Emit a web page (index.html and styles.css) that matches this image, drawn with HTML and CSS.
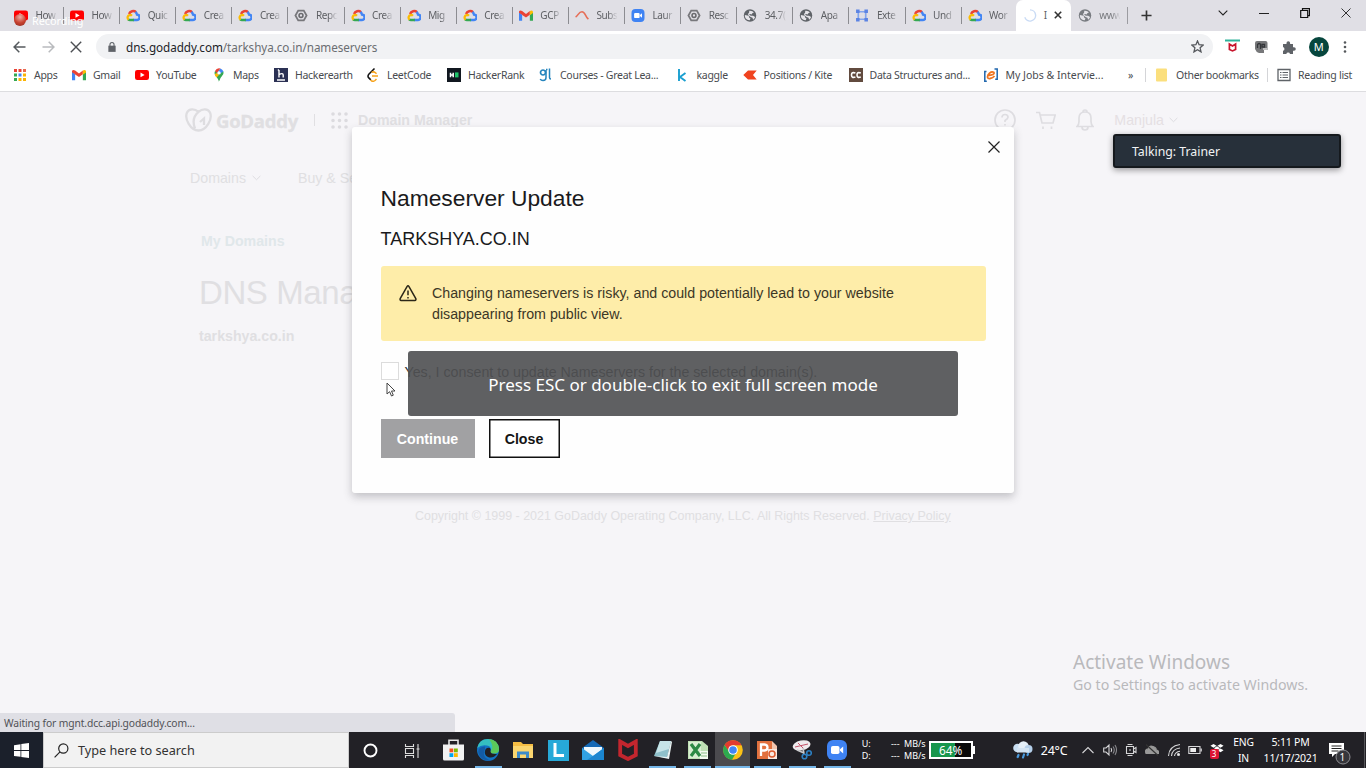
FILE: index.html
```html
<!DOCTYPE html>
<html lang="en">
<head>
<meta charset="utf-8">
<title>DNS Management</title>
<link rel="stylesheet" href="styles.css">
</head>
<body>
<svg class="defs" width="0" height="0">
  <symbol id="yt" viewBox="0 0 16 12"><rect width="16" height="11.5" y=".2" rx="2.6" fill="#f00"/><path d="M6.3 3.2v5.4L11 5.9z" fill="#fff"/></symbol>
  <symbol id="cloud" viewBox="0 0 16 14"><path d="M3.5 5.3A5 5 0 0 1 11.5 3.2" fill="none" stroke="#ea4335" stroke-width="2.8"/><path d="M10.8 3A5 5 0 0 1 12.6 6a3.1 3.1 0 0 1-.4 6.2H8" fill="none" stroke="#4285f4" stroke-width="2.8"/><path d="M9 12.2H4.6A3 3 0 0 1 2.5 11.4" fill="none" stroke="#34a853" stroke-width="2.8"/><path d="M3 11.8A3.2 3.2 0 0 1 4.4 6.2q1.4 0 2.4 1.1" fill="none" stroke="#fbbc04" stroke-width="2.6"/></symbol>
  <symbol id="hex" viewBox="0 0 14 14"><path d="M4 1.8h6L13 7l-3 5.2H4L1 7z" fill="none" stroke="#77777b" stroke-width="1.9"/><circle cx="7" cy="7" r="2.1" fill="none" stroke="#6a6a6e" stroke-width="1.7"/></symbol>
  <symbol id="gmail" viewBox="0 0 16 12"><path d="M0 1.7V12h3.6V5z" fill="#4285f4"/><path d="M16 1.7V12h-3.6V5z" fill="#34a853"/><path d="M0 1.5Q.8-.5 3.6.9L8 4.2 12.4.9 12.4 5 8 8.3 3.6 5.4V12L3.6 5 0 2.9z" fill="#ea4335"/><path d="M12.4.9Q15-.5 16 1.5v1.6L12.4 5.8z" fill="#fbbc04"/></symbol>
  <symbol id="sub" viewBox="0 0 14 12"><path d="M.6 7.5C3.4 6 3.6 2.2 7 2.2c3.3 0 2.8 4.2 6.4 7.5" fill="none" stroke="#e66e57" stroke-width="1.6"/></symbol>
  <symbol id="zoomus" viewBox="0 0 20 20"><rect width="20" height="20" rx="6" fill="#3f83f3"/><rect x="4" y="6" width="8.5" height="8" rx="1.8" fill="#fff"/><path d="M13 9.2 16.2 6.6v6.8L13 10.8z" fill="#fff"/></symbol>
  <symbol id="globe" viewBox="0 0 14 14"><circle cx="7" cy="7" r="6.7" fill="#5f6368"/><path d="M1.5 6.5 4 7q2 0 2 1.500T7.500 10L6.800 12.200Q2.500 12 1.500 8zM6.200 1.900q3.500-.3 5 1.800l-1.700.8-.8 1.300-1.700-.5-1 1 2 1 2.300.1 2.200 1.200q-.5 2-2.200 3l-.6-2.300-2-.6L5.500 7 4.800 5.300 6 4z" fill="#e5e4e9"/></symbol>
  <symbol id="ext" viewBox="0 0 14 14"><path d="M3 3h8v8H3z" fill="none" stroke="#84a5ec" stroke-width="1.8"/><path d="M.6.6h3.8v3.8H.6zM9.6.6h3.8v3.8H9.6zM.6 9.6h3.8v3.8H.6zM9.6 9.6h3.8v3.8H9.6z" fill="#5b83e3"/></symbol>
  <symbol id="down" viewBox="0 0 10 6"><path d="m.7.7 4.3 4.2L9.3.7" fill="none" stroke="currentColor" stroke-width="1.1"/></symbol>
  <symbol id="x" viewBox="0 0 12 12"><path d="m.8.8 10.4 10.4M11.2.8.8 11.2" fill="none" stroke="currentColor" stroke-width="1.4"/></symbol>
</svg>

<div class="tabs">
  <div class="tab"><svg><use href="#yt"/></svg><span>How</span></div>
  <div class="tab"><svg><use href="#yt"/></svg><span>How</span></div>
  <div class="tab"><svg><use href="#cloud"/></svg><span>Quic</span></div>
  <div class="tab"><svg><use href="#cloud"/></svg><span>Crea</span></div>
  <div class="tab"><svg><use href="#cloud"/></svg><span>Crea</span></div>
  <div class="tab"><svg><use href="#hex"/></svg><span>Repo</span></div>
  <div class="tab"><svg><use href="#cloud"/></svg><span>Crea</span></div>
  <div class="tab"><svg><use href="#cloud"/></svg><span>Mig</span></div>
  <div class="tab"><svg><use href="#cloud"/></svg><span>Crea</span></div>
  <div class="tab"><svg><use href="#gmail"/></svg><span>GCP</span></div>
  <div class="tab"><svg><use href="#sub"/></svg><span>Subs</span></div>
  <div class="tab"><svg><use href="#zoomus"/></svg><span>Laur</span></div>
  <div class="tab"><svg><use href="#hex"/></svg><span>Resc</span></div>
  <div class="tab"><svg><use href="#globe"/></svg><span>34.7(</span></div>
  <div class="tab"><svg><use href="#globe"/></svg><span>Apa</span></div>
  <div class="tab"><svg><use href="#ext"/></svg><span>Exte</span></div>
  <div class="tab"><svg><use href="#cloud"/></svg><span>Und</span></div>
  <div class="tab last"><svg><use href="#cloud"/></svg><span>Wor</span></div>
  <div class="tab active"><svg viewBox="0 0 14 14"><path d="M7 1a6 6 0 1 1-5.6 8" fill="none" stroke="#c9dbf5" stroke-width="1.5"/></svg><span>I</span><svg class="tab-x" viewBox="0 0 8 8"><path d="m.8.8 6.400 6.400M7.200.8.8 7.200" stroke="#333" stroke-width="1.600"/></svg></div>
  <div class="tab www"><svg><use href="#globe"/></svg><span>www</span></div>
  <svg class="plus" viewBox="0 0 12 12"><path d="M6 .5v11M.5 6h11" stroke="#333" stroke-width="1.8"/></svg>
  <div class="window-buttons">
    <svg width="10" height="6"><use href="#down"/></svg>
    <svg width="10" height="10" viewBox="0 0 10 10"><path d="M0 5.500h10" stroke="#222"/></svg>
    <svg width="10" height="10" viewBox="0 0 10 10"><path d="M.7 2.5h7v7h-7zM2.5 2.3V.6h7v7H8" fill="none" stroke="#111" stroke-width="1.2"/></svg>
    <svg width="10" height="10" viewBox="0 0 10 10"><path d="m.5.5 9 9M9.500.5l-9 9" stroke="#333" stroke-width="1"/></svg>
  </div>
  <div class="recording"><i></i><span>Recording</span></div>
</div>

<div class="toolbar">
  <svg width="13" height="12" viewBox="0 0 13 12"><path d="M12.5 6H1.2M6.3.8 1.1 6l5.2 5.2" fill="none" stroke="#555a5e" stroke-width="1.5"/></svg>
  <svg width="13" height="12" viewBox="0 0 13 12"><path d="M.5 6h11.3M6.7.8 11.9 6l-5.2 5.2" fill="none" stroke="#b9bbbe" stroke-width="1.5"/></svg>
  <svg class="stop" width="12" height="12"><use href="#x"/></svg>
  <div class="omnibox">
    <svg width="8" height="10" viewBox="0 0 9 11"><path d="M.4 4h8.2v7H.4z" fill="#5f6368"/><path d="M2.2 4.5V2.8a2.3 2.3 0 0 1 4.6 0v1.7" fill="none" stroke="#5f6368" stroke-width="1.2"/></svg>
    <span class="url"><b>dns.godaddy.com</b>/tarkshya.co.in/nameservers</span>
    <svg class="star" width="13" height="13" viewBox="0 0 14 14"><path d="m7 1 1.7 4.1 4.4.4-3.3 2.9 1 4.4L7 10.5l-3.8 2.3 1-4.4L.9 5.5l4.4-.4z" fill="none" stroke="#55585c" stroke-width="1.4"/></svg>
  </div>
  <div class="tools">
    <svg width="15" height="15" viewBox="0 0 15 15"><path d="M0 1.5h15" stroke="#2eb39b" stroke-width="2"/><path d="M4.4 5v5.4l3.1 1.5 3.1-1.5V5L7.5 7z" fill="none" stroke="#c8152d" stroke-width="1.7"/></svg>
    <svg width="14" height="14" viewBox="0 0 14 14"><path d="M1 3q0-2 2-2h8.500q2 0 2 2v7H10v3H5q-3-1-4-4z" fill="#77787a"/><path d="M3.500 8V4.500q2-2 3 0V9M8 4.500h2.500V7H8z" fill="none" stroke="#34363a" stroke-width="1.3"/><path d="M9 9h4" stroke="#d8d8da" stroke-width="1.5"/></svg>
    <svg width="14" height="14" viewBox="0 0 14 14"><path d="M1 4h3.500V3a1.800 1.800 0 0 1 3.600 0v1H11v3.200h1a1.800 1.800 0 0 1 0 3.600h-1V14H8a1.900 1.900 0 0 0-3.700 0H1v-3.200a1.900 1.900 0 0 0 0-3.700z" fill="#5f6368"/></svg>
    <span class="avatar">M</span>
    <svg width="4" height="12" viewBox="0 0 4 12"><circle cx="2" cy="1.500" r="1.300" fill="#55585c"/><circle cx="2" cy="6" r="1.300" fill="#55585c"/><circle cx="2" cy="10.500" r="1.300" fill="#55585c"/></svg>
  </div>
</div>

<div class="bookmarks">
  <a><svg viewBox="0 0 14 14"><path d="M1 1h3v3H1zM5.500 1h3v3h-3z" fill="#e94335"/><path d="M10 1h3v3h-3z" fill="#ea6a50"/><path d="M1 5.500h3v3H1z" fill="#34a853"/><path d="M5.500 5.500h3v3h-3z" fill="#4285f4"/><path d="M10 5.500h3v3h-3zM5.500 10h3v3h-3zM10 10h3v3h-3z" fill="#fbb404"/><path d="M1 10h3v3H1z" fill="#34a853"/></svg>Apps</a>
  <a><svg><use href="#gmail"/></svg>Gmail</a>
  <a><svg><use href="#yt"/></svg>YouTube</a>
  <a><svg viewBox="0 0 14 14"><path d="M7 14Q6.700 10.500 4 8A4.400 4.400 0 0 1 3 3l4 1.500z" fill="#34a853"/><path d="M3 3a4.700 4.700 0 0 1 5.500-2.600L5 5.200z" fill="#ea4335"/><path d="M8.500.4A4.800 4.800 0 0 1 11.500 4L7.200 6.500 5.700 4z" fill="#4285f4"/><path d="M11.500 3.500Q12 6 10 8T7.300 13L4 8z" fill="#34a853"/><path d="M2.700 6 5 5l2 2-2.500 2.500Q3 8 2.700 6z" fill="#fbbc04"/><circle cx="7" cy="4.900" r="1.700" fill="#fff"/></svg>Maps</a>
  <a><svg viewBox="0 0 14 14"><rect width="14" height="14" fill="#2b3154"/><path d="M5 2v7.500M5 6.500q4-2 4.200.5v2.500M3.800 2H5M3 12h8" fill="none" stroke="#fff" stroke-width="1.400"/></svg>Hackerearth</a>
  <a><svg viewBox="0 0 14 14"><path d="M8.500.5 2.800 6.300q-1.600 2 0 3.600l2 2" fill="none" stroke="#111" stroke-width="1.500"/><path d="m4.500 12 1.300 1q1.700.8 3.200-.5l1.500-1.500M5.500 4.500q2-1.400 4 .3l1 1M6 8h6" fill="none" stroke="#f7a31c" stroke-width="1.500"/></svg>LeetCode</a>
  <a><svg viewBox="0 0 14 14"><rect width="14" height="14" fill="#111820"/><path d="M3.500 4.700v4.600M6.200 4.700v4.600M3.500 7h2.700" stroke="#fff" stroke-width="1.500"/><path d="M8 4.400h3.500v5H8z" fill="#20c46a"/></svg>HackerRank</a>
  <a><svg viewBox="0 0 14 14"><circle cx="4" cy="4.500" r="2.500" fill="none" stroke="#2584bd" stroke-width="1.700"/><path d="M7 2v7.500q0 3-3 3-2 0-2.800-1.500M7 1.500h1.500M10.500.5v9q0 1.500 1.500 1.500" fill="none" stroke="#2584bd" stroke-width="1.500"/></svg>Courses - Great Lea...</a>
  <a><svg viewBox="0 0 14 14"><path d="M3 1v12M9.500 5 4 9l5.500 4" fill="none" stroke="#1a9fd0" stroke-width="1.900"/></svg>kaggle</a>
  <a><svg viewBox="0 0 14 14"><path d="M.3 7 5 2.500h8.700L10 7l3.700 4.500H5z" fill="#f0431f"/></svg>Positions / Kite</a>
  <a><svg viewBox="0 0 14 14"><rect width="14" height="14" fill="#624b3f"/><path d="M6.400 5Q2.500 3.600 2.500 7t3.900 2M11.800 5Q8 3.600 8 7t3.800 2" fill="none" stroke="#fff" stroke-width="1.600"/></svg>Data Structures and...</a>
  <a><svg viewBox="0 0 14 14"><path d="M2.500 3.500H.8v9.700h2M10.500.9h2.700v10.300h-2" fill="none" stroke="#1f66ad" stroke-width="1.500"/><path d="M3.500 7.500Q11 7 10 4.500 7 2.500 4 7q-1.500 4 2 3.500 3-.5 4.500-2.500" fill="none" stroke="#f07520" stroke-width="1.800"/></svg><span class="jobs">My Jobs &amp; Intervie...</span></a>
  <a class="more">»</a>
  <a class="divided"><svg viewBox="0 0 14 14"><rect x="1" y=".5" width="11" height="13" rx="1" fill="#fbdf7d"/></svg>Other bookmarks</a>
  <a class="divided"><svg viewBox="0 0 14 14"><path d="M1 1.500h12v11H1z" fill="none" stroke="#5f6368" stroke-width="1.300"/><path d="M3 4.500h1.500m1 0H11M3 7h1.500m1 0H11M3 9.500h1.500m1 0H11" stroke="#5f6368" stroke-width="1.200"/></svg>Reading list</a>
</div>

<main class="page">
  <header class="site-header">
    <svg width="27" height="24" viewBox="0 0 27 24" fill="none" stroke="#dedde0" stroke-width="2.300"><path d="M13.500 3.800C9.500.3 4 .5 2 4.500c-2.800 6.500 3.500 18 11.500 18S27.800 11 25 4.500C23 .5 17.500.3 13.500 3.800 8.500 8 7.500 14 10 20.500M15 14l4-3.500V17"/></svg>
    <span class="brand">GoDaddy</span>
    <i class="rule"></i>
    <svg class="grid-icon" width="17" height="17" viewBox="0 0 17 17"><path d="M2 2h.01M8.500 2h.01M15 2h.01M2 8.500h.01M8.500 8.500h.01M15 8.500h.01M2 15h.01M8.500 15h.01M15 15h.01" stroke="#dcdbdf" stroke-width="3.600" stroke-linecap="round"/></svg>
    <b>Domain Manager</b>
    <div class="account">
      <svg width="22" height="22" viewBox="0 0 22 22"><circle cx="11" cy="11" r="10"/><path d="M8 8.500q0-3 3-3t3 2.800q0 1.500-3 3.200v1.500M11 15v1.500"/></svg>
      <svg width="20" height="19" viewBox="0 0 20 19"><path d="M0 1.500h3.500L6 12h11l2.200-8H4.500M7 15.500v2.500M15.500 15.500v2.500"/></svg>
      <svg width="18" height="22" viewBox="0 0 18 22"><path d="M1 17.500q2-2 2-5V9q0-6 6-6t6 6v3.500q0 3 2 5zM7 3q0-2 2-2t2 2M6 18q0 3 3 3t3-3"/></svg>
      <span>Manjula</span><svg width="9" height="6"><use href="#down"/></svg>
    </div>
  </header>
  <nav class="site-nav"><span>Domains</span><svg width="9" height="6"><use href="#down"/></svg><span class="buy">Buy &amp; Sell</span></nav>
  <div class="crumb">My Domains</div>
  <h1>DNS Management</h1>
  <div class="domain">tarkshya.co.in</div>
  <footer>Copyright © 1999 - 2021 GoDaddy Operating Company, LLC. All Rights Reserved. <u>Privacy Policy</u></footer>

  <section class="modal">
    <svg class="modal-x" width="12" height="12" viewBox="0 0 12 12"><path d="m.5.5 11 11M11.500.5l-11 11" stroke="#222" stroke-width="1.200"/></svg>
    <h2>Nameserver Update</h2>
    <h3>TARKSHYA.CO.IN</h3>
    <div class="alert">
      <svg width="18" height="17" viewBox="0 0 18 17" fill="none" stroke="#2b2718" stroke-width="1.500"><path d="M8 1.600q1-1.500 2 0l6.800 12q.6 1.700-1 1.900H2.200q-1.600-.2-1-1.900zM9 5.500v4.800M9 12v1.500"/></svg>
      <p>Changing nameservers is risky, and could potentially lead to your website<br>disappearing from public view.</p>
    </div>
    <label class="consent"><i></i><span>Yes, I consent to update Nameservers for the selected domain(s).</span></label>
    <div class="actions"><button class="continue">Continue</button><button class="close">Close</button></div>
  </section>
  <div class="toast">Press ESC or double-click to exit full screen mode</div>
  <svg class="cursor" width="10" height="15" viewBox="0 0 10 15"><path d="M1 1v11l2.600-2.300L5.500 14l1.800-.8L5.500 9H9z" fill="#fff" stroke="#444" stroke-width="1"/></svg>
  <div class="talking">Talking: Trainer</div>
  <div class="activate"><strong>Activate Windows</strong><span>Go to Settings to activate Windows.</span></div>
  <div class="status">Waiting for mgnt.dcc.api.godaddy.com...</div>
</main>

<div class="taskbar">
  <div class="start"><svg width="15" height="15" viewBox="0 0 15 15" fill="#fff"><path d="M0 2.200 6.500 1.200V7H0zM7.300 1 15 0v7H7.300zM0 7.900h6.500v5.900L0 12.900zM7.300 7.900H15V15l-7.700-1z"/></svg></div>
  <div class="search"><svg width="15" height="15" viewBox="0 0 15 15" fill="none" stroke="#222" stroke-width="1.200"><circle cx="9.300" cy="5.500" r="4.600"/><path d="M6 8.800.6 14.300"/></svg><span>Type here to search</span></div>
  <div class="app wide"><svg width="15" height="15" viewBox="0 0 15 15"><circle cx="7.500" cy="7.500" r="6" fill="none" stroke="#fff" stroke-width="1.900"/></svg></div>
  <div class="app wide"><svg width="16" height="15" viewBox="0 0 16 15" fill="none" stroke="#ddd" stroke-width="1.100"><path d="M1.500 1v2.500h8V1M1.500 5.500h8v5h-8zM1.500 15v-2.500h8V15M14 1v14M12.500 6h3"/></svg></div>
  <div class="app"><svg width="21" height="22" viewBox="0 0 21 22"><path d="M6 6V1.200h9V6" fill="none" stroke="#e5e5e5" stroke-width="1.600"/><path d="M0 5.500h21V20q0 1.500-1.500 1.500h-18Q0 21.500 0 20z" fill="#f2f2f2"/><path d="M6.500 9.500h3.800v3.800H6.500z" fill="#f25022"/><path d="M11 9.500h3.800v3.800H11z" fill="#7fba00"/><path d="M6.500 14.200h3.800V18H6.500z" fill="#00a4ef"/><path d="M11 14.200h3.800V18H11z" fill="#ffb900"/></svg></div>
  <div class="app on"><svg width="22" height="22" viewBox="0 0 22 22"><circle cx="11" cy="11" r="11" fill="#1273c4"/><path d="M.3 9Q2 0 11 0q9.500.5 11 9.500.2 5-5 5-4 0-3.500-2 1.500-5-3.500-6Q4 5.500.3 9z" fill="#35bfc0"/><path d="M12 0q9 .8 10 9.500.2 5-5 5-4 0-3.500-2Q18 8 12 0z" fill="#5cc95a"/><path d="M13.500 12.500q0 2.800 6.500 2.500-4 5-9 3-4-2-3-6t5-3q1 1 .5 3.500z" fill="#212126"/><path d="M8 10q-4 9 6 11.500-9 1-12-6t6-8z" fill="#135ba5"/></svg></div>
  <div class="app"><svg width="20" height="18" viewBox="0 0 20 18"><path d="M0 1h8l2 2h10v14H0z" fill="#f5bd43"/><path d="M0 5h20v12H0z" fill="#fbd66f"/><path d="M5.500 17v-5h9v5" fill="none" stroke="#3d8bc9" stroke-width="3"/></svg></div>
  <div class="app"><svg width="21" height="21" viewBox="0 0 21 21"><path d="M0 0h21v21H0z" fill="#27a9d8"/><path d="M7 3v12.500h9" fill="none" stroke="#fff" stroke-width="3"/></svg></div>
  <div class="app"><svg width="22" height="20" viewBox="0 0 22 20"><path d="M0 8 11 0l11 8v12H0z" fill="#1469b6"/><path d="M2 7h18v9H2z" fill="#edf7fd"/><path d="M0 8v12h22V8l-11 8z" fill="#31a2e4"/><path d="m2 7 9 8 9-8z" fill="#eef8fd"/><path d="m11 16 11-8v12H5z" fill="#1b86d0"/></svg></div>
  <div class="app"><svg width="20" height="22" viewBox="0 0 20 22"><path d="M2.200 2.500v13.500l7.800 4 7.800-4V2.500L10 7z" fill="none" stroke="#c3262e" stroke-width="3.800"/></svg></div>
  <div class="app on"><svg width="20" height="20" viewBox="0 0 20 20"><path d="M7 1h11l-4 17-13-2z" fill="#8fc0ca"/><path d="M7 1h11l-2 8L3 13z" fill="#c7e4e8"/><path d="m18 1 1 1-3 17-15-3 13 1z" fill="#e9f2f2"/></svg></div>
  <div class="app on"><svg width="20" height="20" viewBox="0 0 20 20"><path d="M0 1h14l6 5v13H0z" fill="#bfe0b5"/><path d="M1 2h12v16H1z" fill="#d9eed2"/><path d="M12 11h8v8h-8z" fill="#f3faf0"/><path d="M13 13h6M13 16h6" stroke="#8bbd85"/><path d="m3 4 9 12M12 4 3 16" stroke="#2c8a45" stroke-width="3.200"/></svg></div>
  <div class="app on current"><svg width="20" height="20" viewBox="0 0 20 20"><circle cx="10" cy="10" r="9.800" fill="#fbc116"/><path d="M1.500 5a9.800 9.800 0 0 1 17 .2H10L6 12z" fill="#e33b2e"/><path d="M1.500 5A9.800 9.800 0 0 0 9 19.800L13 13l-6 0z" fill="#2da94f"/><circle cx="10" cy="10" r="4.800" fill="#fff"/><circle cx="10" cy="10" r="3.800" fill="#4285f4"/></svg></div>
  <div class="app on"><svg width="20" height="20" viewBox="0 0 20 20"><path d="M0 1h15l5 5v13H0z" fill="#f3c6ae"/><path d="M0 1h15v18H0z" fill="#e2713e"/><path d="M4 16V4.500h3.500q3 .3 3 3t-3 3H5" fill="none" stroke="#fff" stroke-width="2.300"/><path d="M11 9h9v10h-9z" fill="#fbe9e0"/><circle cx="15" cy="14" r="3" fill="none" stroke="#dc5a2d" stroke-width="1.500"/></svg></div>
  <div class="app on"><svg width="20" height="20" viewBox="0 0 20 20"><ellipse cx="9.500" cy="5.500" rx="9" ry="5" fill="#efebee" transform="rotate(-12 9 5)"/><path d="m3 7 13-3M6 3l6 6" stroke="#c5546a"/><path d="m11 8 1 6M5 10l7 3" stroke="#c9c9cc" stroke-width="1.600"/><circle cx="12.500" cy="16.500" r="2.300" fill="none" stroke="#2c7fc1" stroke-width="1.600"/><circle cx="17" cy="13" r="2.300" fill="none" stroke="#2c7fc1" stroke-width="1.600"/></svg></div>
  <div class="app on"><svg width="20" height="20"><use href="#zoomus"/></svg></div>
  <div class="net"><span>U:</span><span>--- MB/s</span><span>D:</span><span>--- MB/s</span></div>
  <div class="battery"><span>64%</span></div>
  <div class="weather"><svg width="20" height="18" viewBox="0 0 20 18"><circle cx="4.500" cy="7" r="4.300" fill="#c9dff2"/><circle cx="10.500" cy="5.500" r="5.300" fill="#e5eff8"/><circle cx="15.500" cy="8" r="4" fill="#b5d0ea"/><path d="M4 7h12v4.500H4z" fill="#d3e4f3"/><path d="m5.500 14-.8 2M11 13.500l-1 3M15 13l-.5 1" stroke="#4a9add" stroke-width="2.200" stroke-linecap="round"/></svg><span>24°C</span></div>
  <div class="tray">
    <svg viewBox="0 0 14 14"><path d="m1.500 10 5.500-5.500L12.500 10"/></svg>
    <svg viewBox="0 0 14 14"><path d="M.7 5v4H3l3 3V2L3 5zM8 5q1.400 2 0 4"/><path d="M10 3.500q2.500 3.500 0 7M12 2q3 5 0 10" stroke="#88888c"/></svg>
    <svg viewBox="0 0 14 14"><path d="M2.500 3.500h7v7h-7zM3.500 1.500h5M3.500 12.500h5M9.500 6l2.500-1.500v5L9.500 8M5 7h2"/></svg>
    <svg viewBox="0 0 14 14"><path d="M1 10.500Q-.5 6 3 6q1-4 5-2.500T11 7q3 0 2.500 3.500z" fill="#999" stroke="#999"/><path d="m1 1.500 12 11" stroke="#333"/></svg>
    <svg viewBox="0 0 14 14"><path d="M1.500 13Q2 3 13 1.500M4.500 13Q5 6 13 5M7.500 13Q8 9 13 8.300"/><circle cx="11.500" cy="11.500" r="1" fill="#fff"/></svg>
    <svg viewBox="0 0 14 14"><path d="M.8 3.500H12v7H.8zM13.300 5.500v3"/><path d="M2.300 5H8v4H2.300z" fill="#eee" stroke="none"/></svg>
    <svg class="dropbox" viewBox="0 0 16 14"><path d="m4 0 3.500 2.200L4 4.400.5 2.200zm8 0 3.500 2.200L12 4.400 8.500 2.200zM8 2.700l3.500 2.200L8 7.100 4.500 4.900zm4 2.500L15.500 7.400 12 9.600 8.500 7.400z" fill="#fff" stroke="none"/></svg>
  </div>
  <div class="lang">ENG<br>IN</div>
  <div class="clock">5:11 PM<br>11/17/2021</div>
  <div class="notify"><svg width="22" height="23" viewBox="0 0 22 23"><path d="M0 1h15v11H6l-3 3v-3H0z" fill="#fff"/><path d="M2.500 4h10M2.500 6.500h10M2.500 9h7" stroke="#222"/><circle cx="14" cy="15" r="7" fill="#36363b" stroke="#8d8d91"/></svg><span>1</span></div>
</div>
</body>
</html>
```

FILE: styles.css
```css
* { box-sizing: border-box; }
body {
  margin: 0; width: 1366px; height: 768px; overflow: hidden;
  display: flex; flex-direction: column;
  font-family: "Noto Sans", "Open Sans", sans-serif; background: #fff; color: #3c4043;
}
svg { flex: none; display: block; }
.defs { position: absolute; }

/* Tab strip */
.tabs { position: relative; height: 31px; background: #e0dfe5; display: flex; align-items: center; padding-left: 7px; }
.tab { flex: none; width: 56.1px; height: 29px; display: flex; align-items: center; padding: 0 0 1px 7px; gap: 7.500px; position: relative; font-size: 10px; color: #5d5f63; }
.tab svg { width: 14px; height: 13px; }
.tab span { width: 22px; white-space: nowrap; letter-spacing: -.4px; -webkit-mask-image: linear-gradient(90deg, #000 55%, transparent 98%); mask-image: linear-gradient(90deg, #000 55%, transparent 98%); }
.tab::after { content: ""; position: absolute; right: -1px; top: 6px; width: 1px; height: 17px; background: #8c8c91; }
.tab.last::after, .tab.active::after { display: none; }
.tab.active { background: #fff; height: 31px; border-radius: 7px 7px 0 0; gap: 7px; width: 55px; margin-left: -1px; padding-bottom: 1px; }
.tab.active span { width: 3px; -webkit-mask-image: none; mask-image: none; }
.tab.active .tab-x { width: 8px; height: 8px; }
.tab.www { opacity: .8; }
.plus { width: 11px; height: 11px; margin-left: 14px; }
.window-buttons { margin-left: auto; display: flex; align-items: center; gap: 31px; padding: 0 15px 5px 0; color: #222; }
.recording { position: absolute; left: 14px; top: 12px; display: flex; align-items: center; gap: 6px; height: 16px; width: 74px; color: #fff; font-size: 10.800px; }
.recording i { flex: none; width: 12px; height: 12px; border-radius: 50%; background: radial-gradient(circle at 50% 25%, #eeb0a6, #c8412f 55%, #8b2c21); }

/* Address row */
.toolbar { height: 31px; display: flex; align-items: center; padding-left: 13px; gap: 15.700px; }
.toolbar .stop { color: #4c4f53; }
.omnibox { width: 1117px; height: 25px; margin-left: -2px; border-radius: 13px; background: #f1f2f4; display: flex; align-items: center; padding: 0 9px 0 12px; gap: 10px; }
.url { font-size: 11.700px; color: #6b6e72; letter-spacing: -.07px; }
.url b { font-weight: 400; color: #222428; }
.star { margin-left: auto; }
.tools { display: flex; align-items: center; gap: 14px; margin-left: -4px; }
.avatar { width: 20px; height: 20px; border-radius: 50%; background: #06463d; color: #fff; font-size: 11px; line-height: 20px; text-align: center; margin-left: -1px; }

/* Bookmarks */
.bookmarks {
  height: 30px; border-bottom: 1px solid #dddde0; padding: 0 0 3px 13px;
  display: grid; align-items: center;
  grid-template-columns: 59px 63px 77px 62px 92px 81px 92px 136.500px 67px 106px 135px 144.500px 17px 122px 100px;
  font-size: 10.500px; letter-spacing: -.28px; color: #484b4f;
}
.bookmarks a { display: flex; align-items: center; gap: 7px; white-space: nowrap; }
.bookmarks a svg { width: 14px; height: 14px; }
.bookmarks a.divided { border-left: 1px solid #d4d5d8; padding-left: 9px; }
.jobs { letter-spacing: 0; margin-left: 1px; }

/* Page behind the dialog */
.page { position: relative; height: 640px; background: #f6f5f8; font-family: "Liberation Sans", Arial, sans-serif; font-size: 14.2px; color: #e0dfe2; }
.site-header { height: 56px; display: flex; align-items: center; padding-left: 185px; }
.brand { font: 700 18.500px "Open Sans", sans-serif; margin-left: 4px; letter-spacing: -.25px; width: 84px; -webkit-text-stroke: .3px #e0dfe2; }
.rule { width: 1px; height: 12px; background: #e0dfe2; margin-left: 14px; }
.grid-icon { margin: 0 10px 0 16px; }
.account { display: flex; align-items: center; gap: 20px; margin-left: auto; padding-right: 188px; }
.account svg { fill: none; stroke: #dedde1; stroke-width: 1.700; }
.account span { color: #e5e0e3; margin-right: -15px; }
.account svg:last-child, .site-nav svg { color: #dddce0; }
.site-nav { height: 60px; display: flex; align-items: center; padding-left: 190px; gap: 6px; }
.buy { margin-left: 31px; }
.crumb { height: 66px; line-height: 66px; padding-left: 201px; font-weight: 700; color: #e0e7ea; }
.page h1 { margin: 0; height: 36px; line-height: 37px; padding-left: 199px; font-size: 33px; letter-spacing: -.4px; font-weight: 400; }
.domain { height: 52px; line-height: 52px; padding-left: 199px; font-weight: 700; }
.page footer { margin-top: 142px; padding-left: 415px; height: 24px; line-height: 24px; font-size: 12.460px; white-space: nowrap; }

.modal { position: absolute; left: 352px; top: 35px; width: 662px; height: 366px; background: #fefefe; border-radius: 3px; box-shadow: 0 4px 9px rgba(60, 60, 70, .28); padding: 14px 28.500px 0; color: #1a1a1c; display: flex; flex-direction: column; }
.modal-x { align-self: flex-end; margin-right: -14.500px; }
.modal h2 { margin: 30px 0 0; font-size: 22.800px; line-height: 30px; font-weight: 400; }
.modal h3 { margin: 14px 0 0; font-size: 18px; line-height: 24px; font-weight: 400; }
.alert { margin-top: 15px; width: 605px; height: 75px; border-radius: 3px; background: #feeda9; display: flex; padding: 17px 18px; gap: 15.500px; color: #3c3726; }
.alert svg { margin-top: 2px; }
.alert p { margin: 0; line-height: 21.200px; white-space: nowrap; font-size: 14.240px; }
.consent { margin-top: 19px; display: flex; align-items: center; gap: 6px; height: 22px; color: #333; white-space: nowrap; }
.consent i { width: 18px; height: 18px; border: 1px solid #dcdcdc; background: #fff; }
.consent span { padding-top: 2px; font-size: 14.220px; }
.actions { margin-top: 37px; display: flex; gap: 14px; }
.actions button { height: 39px; border: 0; font: 700 14.2px "Liberation Sans", Arial, sans-serif; padding: 0; }
.actions .continue { width: 94px; background: #a1a1a3; color: #fff; }
.actions .close { width: 71px; background: #fff; border: 1px solid #111; box-shadow: inset 0 0 0 .5px #111; color: #151515; }

/* Overlays */
.toast { position: absolute; left: 408px; top: 259px; width: 550px; height: 65px; border-radius: 3px; background: rgba(79, 80, 82, .91); color: #fff; font: 17px/67px "Noto Sans", sans-serif; text-align: center; white-space: nowrap; }
.cursor { position: absolute; left: 386px; top: 290px; }
.talking { position: absolute; left: 1113px; top: 42px; width: 228px; height: 34px; border: 2px solid #15191d; border-radius: 3px; background: #27303a; box-shadow: 0 2px 6px rgba(0, 0, 0, .4); color: #f1f3f5; font: 12.300px/31px "Noto Sans", sans-serif; padding-left: 17px; }
.activate { position: absolute; left: 1073px; top: 557px; display: flex; flex-direction: column; color: #b9b9bc; font-family: "Noto Sans", sans-serif; white-space: nowrap; }
.activate strong { font-weight: 400; font-size: 19px; line-height: 26px; }
.activate span { font-size: 14.200px; line-height: 20px; }
.status { position: absolute; left: 0; bottom: 0; width: 455px; height: 19px; background: #dfdfe5; border-radius: 0 3px 0 0; color: #505156; font: 10.300px/20px "Noto Sans", sans-serif; letter-spacing: -.12px; padding-left: 4px; }

/* Taskbar */
.taskbar { height: 36px; display: flex; align-items: stretch; background: #222126; color: #fff; }
.start { width: 43px; background: #1b202b; display: flex; align-items: center; justify-content: center; }
.search { width: 306px; background: #f2f2f2; border: 1px solid #ccc; color: #333; display: flex; align-items: center; padding-left: 10px; gap: 9px; font-size: 12.700px; }
.app { width: 34.900px; flex: none; display: flex; align-items: center; justify-content: center; position: relative; }
.app.wide { width: 42px; }
.app.wide + .app:not(.wide) { margin-left: 3px; }
.app.on::after { content: ""; position: absolute; left: 4px; right: 4px; bottom: 0; height: 2px; background: #75b6e8; }
.app.current { background: #4b4a4e; }
.app.current::after { left: 0; right: 0; }
.net { width: 65px; margin-left: 7px; display: grid; grid-template-columns: 20px 44px; align-content: center; font-size: 9px; line-height: 12px; white-space: nowrap; }
.net span:nth-child(even) { text-align: right; word-spacing: 2px; }
.battery { align-self: center; width: 44px; height: 18px; margin-left: 2px; border: 2px solid #fff; background: linear-gradient(90deg, #18964c 60%, #0a0a0a 60%); font-size: 11.800px; line-height: 14px; text-align: center; position: relative; }
.battery::after { content: ""; position: absolute; right: -4px; top: 3px; width: 2px; height: 8px; background: #fff; }
.weather { display: flex; align-items: center; gap: 8px; margin-left: 40px; width: 68.500px; font-size: 12.500px; letter-spacing: -.2px; }
.tray { display: flex; align-items: center; gap: 7.400px; position: relative; }
.tray svg { width: 14px; height: 14px; fill: none; stroke: #d5d5d7; stroke-width: 1.100; }
.tray::after { content: "3"; position: absolute; right: 5px; top: 17px; width: 9px; height: 10px; border-radius: 2px; background: #dc1332; font-size: 8px; line-height: 10px; text-align: center; }
.lang { width: 40px; text-align: center; font-size: 10.300px; line-height: 16px; padding-top: 2px; letter-spacing: -.2px; }
.clock { width: 56px; margin-left: -1px; text-align: center; font-size: 10.500px; line-height: 16px; padding-top: 2px; letter-spacing: -.2px; white-space: nowrap; }
.notify { position: relative; margin-left: 10px; width: 36px; border-right: 1px solid #56565a; padding-top: 10px; }
.notify span { position: absolute; left: 11px; top: 18px; font-size: 10px; line-height: 14px; }
```
